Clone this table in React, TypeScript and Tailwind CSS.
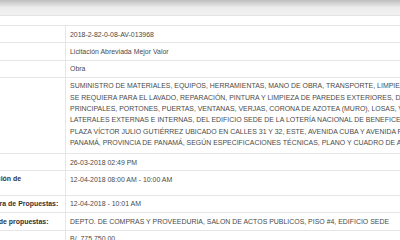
import React from "react";

type Row = { label: string[]; value: string[]; desc?: boolean; tightLabel?: boolean };

const rows: Row[] = [
  { label: ["Número:"], value: ["2018-2-82-0-08-AV-013968"] },
  { label: ["Tipo de Procedimiento:"], value: ["Licitación Abreviada Mejor Valor"] },
  { label: ["Objeto:"], value: ["Obra"] },
  {
    label: ["Descripción:"],
    desc: true,
    value: [
      "SUMINISTRO DE MATERIALES, EQUIPOS, HERRAMIENTAS, MANO DE OBRA, TRANSPORTE, LIMPIEZA Y TODO LO QUE",
      "SE REQUIERA PARA EL LAVADO, REPARACIÓN, PINTURA Y LIMPIEZA DE PAREDES EXTERIORES, DE LAS FACHADAS",
      "PRINCIPALES, PORTONES, PUERTAS, VENTANAS, VERJAS, CORONA DE AZOTEA (MURO), LOSAS, VENTANAS",
      "LATERALES EXTERNAS E INTERNAS, DEL EDIFICIO SEDE DE LA LOTERÍA NACIONAL DE BENEFICENCIA, UBICADO EN",
      "PLAZA VÍCTOR JULIO GUTIÉRREZ UBICADO EN CALLES 31 Y 32, ESTE, AVENIDA CUBA Y AVENIDA PERÚ, CIUDAD DE",
      "PANAMÁ, PROVINCIA DE PANAMÁ, SEGÚN ESPECIFICACIONES TÉCNICAS, PLANO Y CUADRO DE ACTIVIDADES.",
    ],
  },
  { label: ["Fecha de Publicación:"], value: ["26-03-2018 02:49 PM"] },
  {
    label: ["Fecha y Hora Presentación de", "Propuestas:"],
    value: ["12-04-2018 08:00 AM - 10:00 AM"],
    tightLabel: true,
  },
  { label: ["Fecha y Hora de Apertura de Propuestas:"], value: ["12-04-2018 - 10:01 AM"] },
  {
    label: ["Lugar de Presentación de propuestas:"],
    value: ["DEPTO. DE COMPRAS Y PROVEEDURIA, SALON DE ACTOS PUBLICOS, PISO #4, EDIFICIO SEDE"],
  },
  { label: ["Precio Referencia:"], value: ["B/. 775,750.00"] },
];

export default function App() {
  return (
    <div
      className="w-[400px] h-[240px] overflow-hidden bg-white"
      style={{ fontFamily: '"Liberation Sans", Arial, sans-serif' }}
    >
      <div className="h-[16px] bg-gradient-to-b from-[#bdbdbd] via-[#ececec] to-[#f1f1f1] border-b border-[#e2e2e2]" />
      <div className="h-[10px] border-b border-[#e6e6e6]" />
      <div className="ml-[-82px] w-[700px]">
        {rows.map((r, i) => (
          <div key={i} className="flex border-b border-[#e6e6e6] text-[6.95px] leading-[11.3px]">
            <div
              className={
                r.tightLabel
                  ? "w-[148px] shrink-0 border-r border-[#e6e6e6] pl-[4px] pt-[2.5px] pb-[1px] font-bold text-[#333] whitespace-nowrap leading-[10px]"
                  : "w-[148px] shrink-0 border-r border-[#e6e6e6] pl-[4px] py-[2.5px] font-bold text-[#333] whitespace-nowrap"
              }
            >
              {r.label.map((l, j) => (
                <div key={j}>{l}</div>
              ))}
            </div>
            <div
              className={
                r.desc
                  ? "flex-1 pl-[4px] pt-[2.5px] pb-[5px] text-[#4a4a4a] whitespace-nowrap"
                  : "flex-1 pl-[4px] py-[2.5px] text-[#4a4a4a] whitespace-nowrap"
              }
            >
              {r.value.map((l, j) => (
                <div key={j}>{l}</div>
              ))}
            </div>
          </div>
        ))}
      </div>
    </div>
  );
}
